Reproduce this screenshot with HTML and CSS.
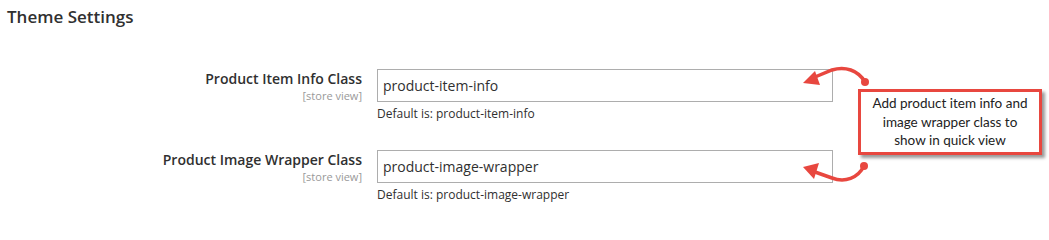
FILE: index.html
```html
<!DOCTYPE html>
<html>
<head>
<meta charset="utf-8">
<link rel="stylesheet" href="styles.css">
</head>
<body>
<div class="page">
  <h2 class="section-title">Theme Settings</h2>
  <div class="fields">
    <div class="field">
      <div class="label">
        <span class="label-text">Product Item Info Class</span>
        <span class="scope">[store view]</span>
      </div>
      <div class="control">
        <input class="input" type="text" value="product-item-info">
        <div class="note">Default is: product-item-info</div>
      </div>
    </div>
    <div class="field">
      <div class="label">
        <span class="label-text">Product Image Wrapper Class</span>
        <span class="scope">[store view]</span>
      </div>
      <div class="control">
        <input class="input" type="text" value="product-image-wrapper">
        <div class="note">Default is: product-image-wrapper</div>
      </div>
    </div>
  </div>
  <svg class="arrows" width="1049" height="210" viewBox="0 0 1049 210">
    <g fill="none" stroke="#e8473f" stroke-width="3.5" stroke-linecap="round">
      <path d="M865,82 C858,70 845,66 832,70 L815,77"/>
      <path d="M864,166 C858,178 845,183 832,178 L815,172"/>
    </g>
    <g fill="#e8473f">
      <circle cx="865" cy="82" r="4"/>
      <circle cx="864" cy="166" r="4"/>
      <polygon points="803,83 815,71 820,85"/>
      <polygon points="803,167 819,163 814,179"/>
    </g>
  </svg>
  <div class="callout">Add product item info and image wrapper class to show in quick view</div>
</div>
</body>
</html>
```

FILE: styles.css
```css
html, body {
  margin: 0;
  padding: 0;
  background: #ffffff;
}

.page {
  position: relative;
  width: 1049px;
  height: 210px;
  overflow: hidden;
  font-family: "Open Sans", "Liberation Sans", sans-serif;
  color: #303030;
}

.section-title {
  margin: 0;
  padding: 5px 0 0 7px;
  font-size: 17px;
  line-height: 23px;
  font-weight: 600;
  color: #303030;
}

.fields {
  display: flex;
  flex-direction: column;
  gap: 28px;
  padding-top: 41px;
}

.field {
  display: grid;
  grid-template-columns: 362px 456px;
  column-gap: 15px;
}

.label {
  display: flex;
  flex-direction: column;
  align-items: flex-end;
  text-align: right;
}

.label-text {
  font-size: 14px;
  line-height: 19px;
  font-weight: 600;
  color: #303030;
}

.scope {
  font-size: 11px;
  line-height: 15px;
  color: #999999;
}

.control {
  display: flex;
  flex-direction: column;
}

.input {
  box-sizing: border-box;
  width: 456px;
  height: 33px;
  margin: 0;
  border: 1px solid #adadad;
  border-radius: 0;
  padding: 0 5px;
  font-family: "Open Sans", "Liberation Sans", sans-serif;
  font-size: 14px;
  color: #303030;
  background: #ffffff;
  outline: none;
}

.note {
  margin-top: 4px;
  font-size: 12px;
  line-height: 16px;
  color: #303030;
}

.arrows {
  position: absolute;
  left: 0;
  top: 0;
  pointer-events: none;
}

.callout {
  position: absolute;
  left: 858px;
  top: 89px;
  width: 184px;
  height: 66px;
  box-sizing: border-box;
  border: 3px solid #e8473f;
  background: #ffffff;
  box-shadow: 3px 3px 3px rgba(0, 0, 0, 0.4);
  display: flex;
  align-items: center;
  justify-content: center;
  text-align: center;
  padding: 0 6px;
  font-family: Lato, "Open Sans", sans-serif;
  font-size: 13.5px;
  line-height: 18.5px;
  color: #222222;
}
```
